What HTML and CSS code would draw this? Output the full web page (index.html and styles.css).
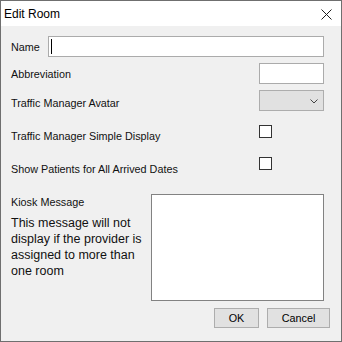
FILE: index.html
```html
<!DOCTYPE html>
<html lang="en">
<head>
  <meta charset="UTF-8">
  <title>Edit Room</title>
  <link rel="stylesheet" href="styles.css">
</head>
<body>
  <div class="window">
    <div class="titlebar">
      <span class="title">Edit Room</span>
      <svg class="close" width="11" height="11" viewBox="0 0 11 11">
        <path d="M0.5 0.5 L10.5 10.5 M10.5 0.5 L0.5 10.5" stroke="#1e1e1e" stroke-width="1" fill="none"/>
      </svg>
    </div>

    <div class="content">
      <div class="row row-name">
        <label for="name">Name</label>
        <div class="name-wrap">
          <input type="text" id="name" class="field name">
          <span class="caret"></span>
        </div>
      </div>

      <div class="row row-short">
        <label for="abbr">Abbreviation</label>
        <input type="text" id="abbr" class="field short">
      </div>

      <div class="row row-short row-avatar">
        <label for="avatar">Traffic Manager Avatar</label>
        <div class="select-wrap">
          <select id="avatar" class="combo"><option></option></select>
          <svg class="chevron" width="8" height="5" viewBox="0 0 8 5">
            <path d="M0.5 0.5 L4 4 L7.5 0.5" stroke="#444" stroke-width="1" fill="none"/>
          </svg>
        </div>
      </div>

      <div class="row row-check">
        <label for="simple">Traffic Manager Simple Display</label>
        <div class="check-cell"><input type="checkbox" id="simple" class="check"></div>
      </div>

      <div class="row row-check row-check2">
        <label for="arrived">Show Patients for All Arrived Dates</label>
        <div class="check-cell"><input type="checkbox" id="arrived" class="check"></div>
      </div>

      <div class="row row-kiosk">
        <div class="kiosk-text">
          <label for="kiosk">Kiosk Message</label>
          <p class="note">This message will not display if the provider is assigned to more than one room</p>
        </div>
        <textarea id="kiosk" class="message"></textarea>
      </div>

      <div class="buttons">
        <button class="btn ok">OK</button>
        <button class="btn cancel">Cancel</button>
      </div>
    </div>
  </div>
</body>
</html>
```

FILE: styles.css
```css
body {margin: 0; background: #f0f0f0; font: 10.8px/14px "Liberation Sans", Arial, sans-serif; color: #111;}

.window {width: 342px; height: 342px; box-sizing: border-box; border: 1px solid #6f6f6f; background: #f0f0f0; display: flex; flex-direction: column;}
.titlebar {height: 25px; flex: none; background: #fff; display: flex; align-items: center; justify-content: space-between; padding: 0 9px 0 3px;}
.title {font-size: 12px; color: #000;}
.close {display: block; margin-top: 1px;}

.content {padding: 10px 17px 0 10px;}
.row {display: flex; justify-content: space-between; align-items: center;}
label {display: block; line-height: 14px;}

.field, .message, .combo, .btn, .check {margin: 0; box-sizing: border-box; outline: 0; font: inherit;}
.field {height: 21px; border: 1px solid #ababab; background: #fff; padding: 0 3px;}

.row-name {height: 21px;}
.name-wrap {position: relative; width: 276px;}
.name {width: 100%; display: block;}
.caret {position: absolute; left: 3px; top: 3px; width: 1px; height: 15px; background: #000;}

.row-short {height: 21px; margin-top: 6px;}
.short {width: 65px;}
.row-avatar label {padding-top: 5px;}

.select-wrap {position: relative; width: 65px; height: 21px;}
.combo {width: 100%; height: 100%; display: block; appearance: none; -webkit-appearance: none; border: 1px solid #adadad; background: #e1e1e1; border-radius: 0;}
.chevron {position: absolute; left: 51px; top: 9px;}

.row-check {height: 20px; margin-top: 14px; align-items: flex-start;}
.row-check label {margin-top: 4px;}
.row-check2 {margin-top: 12px;}
.row-check2 label {margin-top: 5px;}
.check-cell {width: 65px;}
.check {display: block; appearance: none; -webkit-appearance: none; width: 13px; height: 13px; border: 1px solid #333; background: #fff; border-radius: 0;}

.row-kiosk {margin-top: 17px; align-items: flex-start;}
.row-kiosk label {margin-top: 1px;}
.kiosk-text {width: 138px;}
.note {margin: 6px 0 0; font-size: 12.5px; line-height: 16px; color: #111;}
.message {width: 173px; height: 107px; border: 1px solid #828282; background: #fff; resize: none; padding: 2px;}

.buttons {display: flex; justify-content: flex-end; gap: 8px; margin: 7px -6px 0 0;}
.btn {height: 20px; border: 1px solid #adadad; background: #e1e1e1; padding: 0; color: #000;}
.ok {width: 45px;}
.cancel {width: 63px;}
```
